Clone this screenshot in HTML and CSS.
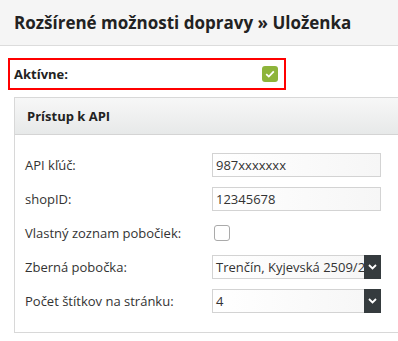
FILE: index.html
```html
<!DOCTYPE HTML>
<html lang="sk">
<head>
    <meta charset="UTF-8">
    <meta name="viewport" content="width=device-width, initial-scale=1.0">
    <title>Rozšírené možnosti dopravy</title>
    <link rel="stylesheet" href="styles.css">
</head>
<body>
    <div class="page-header">
        <h1>Rozšírené možnosti dopravy » Uloženka</h1>
    </div>

    <div class="content">
        <div class="active-box">
            <label>Aktívne:</label>
            <span class="check checked">
                <svg width="10" height="8" viewBox="0 0 10 8"><path d="M1.2 4.2 L3.8 6.6 L8.8 1.4" fill="none" stroke="#fff" stroke-width="1.8"/></svg>
            </span>
        </div>

        <div class="panel">
            <div class="panel-title">Prístup k API</div>
            <div class="panel-body">
                <div class="row">
                    <label>API kľúč:</label>
                    <input type="text" class="field" value="987xxxxxxx">
                </div>
                <div class="row">
                    <label>shopID:</label>
                    <input type="text" class="field" value="12345678">
                </div>
                <div class="row">
                    <label>Vlastný zoznam pobočiek:</label>
                    <span class="check"></span>
                </div>
                <div class="row">
                    <label>Zberná pobočka:</label>
                    <div class="select">
                        <span class="select-value">Trenčín, Kyjevská 2509/2</span>
                        <span class="select-btn">
                            <svg width="9" height="6" viewBox="0 0 9 6"><path d="M1 1 L4.5 4.5 L8 1" fill="none" stroke="#fff" stroke-width="1.8"/></svg>
                        </span>
                    </div>
                </div>
                <div class="row">
                    <label>Počet štítkov na stránku:</label>
                    <div class="select">
                        <span class="select-value">4</span>
                        <span class="select-btn">
                            <svg width="9" height="6" viewBox="0 0 9 6"><path d="M1 1 L4.5 4.5 L8 1" fill="none" stroke="#fff" stroke-width="1.8"/></svg>
                        </span>
                    </div>
                </div>
            </div>
        </div>
    </div>
</body>
</html>
```

FILE: styles.css
```css
/* Page basics */
body {
    font-family: "Open Sans", Arial, sans-serif;
    font-size: 13px;
    color: #333;
    margin: 0;
    background-color: #fff;
}

/* Top header */
.page-header {
    height: 45px;
    background-color: #f5f5f5;
    border-bottom: 1px solid #dcdcdc;
    padding-left: 14px;
    display: flex;
    align-items: center;
}

.page-header h1 {
    margin: 0;
    font-size: 17px;
    font-weight: bold;
    color: #222;
}

.content {
    padding: 12px 0 0 8px;
}

/* Highlighted active switch */
.active-box {
    width: 264px;
    height: 28px;
    border: 2px solid #f00;
    display: flex;
    align-items: center;
    justify-content: space-between;
    padding: 0 6px 0 4px;
}

.active-box label {
    font-weight: bold;
    color: #222;
}

.check {
    width: 14px;
    height: 14px;
    border: 1px solid #aaa;
    border-radius: 3px;
    display: inline-flex;
    align-items: center;
    justify-content: center;
    background-color: #fff;
}

.check.checked {
    width: 16px;
    height: 16px;
    border: none;
    background-color: #8db43a;
}

/* Settings panel (runs on past the right edge, so no right border) */
.panel {
    margin: 7px 0 0 6px;
    border: 1px solid #d8d8d8;
    border-right: none;
}

.panel-title {
    height: 36px;
    line-height: 36px;
    padding-left: 12px;
    font-weight: bold;
    color: #222;
    background: linear-gradient(#f7f7f7, #e7e9e9);
    border-bottom: 1px solid #d4d4d4;
}

.panel-body {
    padding: 18px 0 19px 10px;
    display: flex;
    flex-direction: column;
    gap: 10px;
}

.row {
    display: flex;
    align-items: center;
    height: 24px;
}

.row label {
    width: 187px;
    flex-shrink: 0;
}

.row .check {
    margin-left: 2px;
}

.field {
    box-sizing: border-box;
    width: 169px;
    height: 24px;
    margin: 0;
    padding: 0 3px;
    border: 1px solid #d3d3d3;
    background: linear-gradient(to right, #fff, #f6f6f6);
    font-family: inherit;
    font-size: 13px;
    color: #333;
}

.select {
    box-sizing: border-box;
    width: 169px;
    height: 24px;
    border: 1px solid #d3d3d3;
    border-right: none;
    display: flex;
    background: linear-gradient(to right, #fff, #f6f6f6);
}

.select-value {
    flex: 1;
    padding-left: 3px;
    line-height: 22px;
    overflow: hidden;
    white-space: nowrap;
}

.select-btn {
    width: 17px;
    margin: -1px 0;
    background-color: #353b3e;
    display: flex;
    align-items: center;
    justify-content: center;
}
```
